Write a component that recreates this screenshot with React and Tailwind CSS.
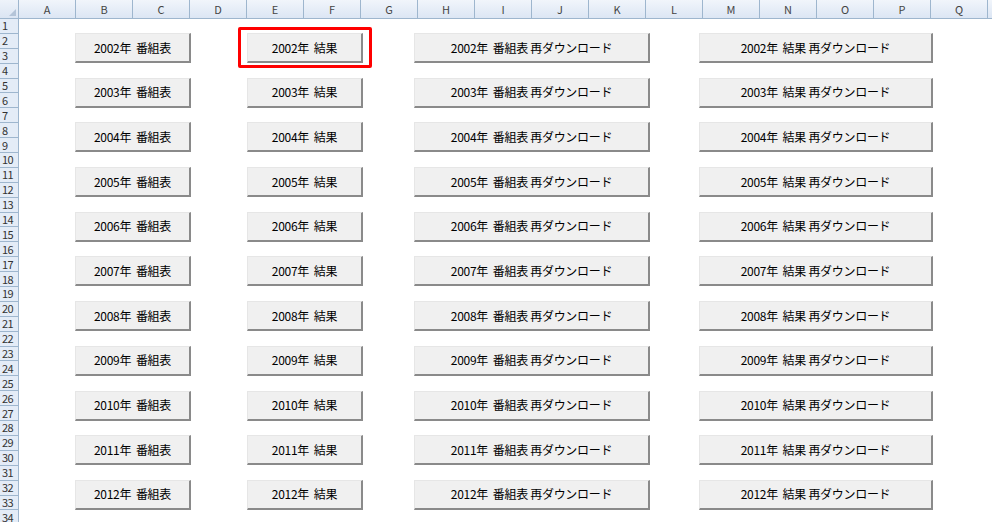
// Excel-like sheet with macro buttons
const columns = ["A", "B", "C", "D", "E", "F", "G", "H", "I", "J", "K", "L", "M", "N", "O", "P", "Q"];
const rows = Array.from({ length: 34 }, (_, i) => i + 1);
const years = Array.from({ length: 11 }, (_, i) => 2002 + i);

const font = { fontFamily: '"Noto Sans CJK JP", "Noto Sans", sans-serif' };

const SheetButton = ({ label, className = "" }) => (
  <div
    className={`h-[30px] flex items-center justify-center bg-[#f0f0f0] border-t border-l border-t-[#e6e6e6] border-l-[#e6e6e6] border-b-2 border-r-2 border-b-[#8a8a8a] border-r-[#8a8a8a] text-[12px] tracking-[-0.3px] text-black whitespace-pre leading-none ${className}`}
  >
    {label}
  </div>
);

const App = () => {
  return (
    <div className="w-[992px] h-[522px] overflow-hidden bg-white" style={font}>
      {/* Column header */}
      <div className="flex h-[19px] border-b border-[#9eb6ce]">
        <div className="w-[19px] shrink-0 relative bg-gradient-to-b from-[#eef3fa] to-[#dbe5f3] border-r border-[#9eb6ce]">
          <div className="absolute right-[2px] bottom-[2px] w-0 h-0 border-l-[7px] border-l-transparent border-b-[7px] border-b-[#b4c4d8]" />
        </div>
        {columns.map(c => (
          <div
            key={c}
            className="w-[57px] shrink-0 flex items-center justify-center bg-gradient-to-b from-[#f1f5fb] to-[#dce6f4] border-r border-[#9eb6ce] text-[11px] text-[#444]"
          >
            {c}
          </div>
        ))}
        <div className="flex-1 bg-gradient-to-b from-[#f1f5fb] to-[#dce6f4]" />
      </div>

      <div className="flex">
        {/* Row header */}
        <div className="w-[19px] shrink-0 flex flex-col">
          {rows.map(r => (
            <div
              key={r}
              className="h-[14.9px] shrink-0 flex items-center pl-[2px] bg-[#e4ecf7] border-r border-b border-[#9eb6ce] text-[11px] tracking-[-0.5px] text-[#333] leading-none"
            >
              {r}
            </div>
          ))}
        </div>

        {/* Sheet area */}
        <div className="flex-1 flex flex-col gap-[14.7px] pt-[14px]">
          {years.map((y, i) => (
            <div key={y} className="flex">
              <SheetButton label={`${y}年  番組表`} className="ml-[56px] w-[116px]" />
              <div className="relative ml-[56px]">
                <SheetButton label={`${y}年  結果`} className="w-[116px]" />
                {i === 0 && (
                  <div className="absolute -left-[9px] -right-[9px] -top-[6px] -bottom-[5px] border-[3px] border-[#ff0000] rounded-[2px]" />
                )}
              </div>
              <SheetButton label={`${y}年  番組表 再ダウンロード`} className="ml-[51px] w-[236px]" />
              <SheetButton label={`${y}年  結果 再ダウンロード`} className="ml-[49px] w-[234px]" />
            </div>
          ))}
        </div>
      </div>
    </div>
  );
};

export default App;
